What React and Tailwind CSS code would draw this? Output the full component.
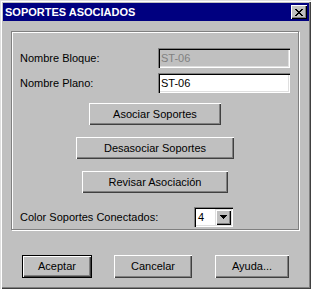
import React from "react";

const font = { fontFamily: '"Liberation Sans", Arial, sans-serif' };

function Btn({ children, w, h = 22, def = false }) {
  const inner = (
    <div
      className="flex items-center justify-center bg-[#c0c0c0] text-[11px] text-black shadow-[inset_1px_1px_0_#ffffff,inset_-1px_-1px_0_#404040,inset_-2px_-2px_0_#808080]"
      style={{ width: def ? w - 2 : w, height: def ? h - 2 : h }}
    >
      {children}
    </div>
  );
  if (def) return <div className="border border-black" style={{ width: w, height: h }}>{inner}</div>;
  return inner;
}

function Field({ value, disabled }) {
  return (
    <div
      className={`w-[132px] h-[20px] flex items-center pl-[3px] text-[11px] shadow-[inset_1px_1px_0_#808080,inset_2px_2px_0_#000000,inset_-1px_-1px_0_#ffffff,inset_-2px_-2px_0_#dfdfdf] ${disabled ? "bg-[#c0c0c0] text-[#808080]" : "bg-white text-black"}`}
    >
      {value}
    </div>
  );
}

export default function App() {
  return (
    <div
      className="w-[311px] h-[289px] bg-[#c0c0c0] flex flex-col pt-[3px] pl-[3px] pr-[2px] shadow-[inset_1px_1px_0_#dfdfdf,inset_2px_2px_0_#ffffff,inset_-1px_-1px_0_#404040,inset_-2px_-2px_0_#808080]"
      style={font}
    >
      <div className="h-[18px] bg-[#000080] flex items-center justify-between pl-[2px] pr-[2px]">
        <span className="text-white font-bold text-[11px] leading-none">SOPORTES ASOCIADOS</span>
        <div className="w-[16px] h-[14px] bg-[#c0c0c0] flex items-center justify-center shadow-[inset_1px_1px_0_#ffffff,inset_-1px_-1px_0_#000000,inset_-2px_-2px_0_#808080]">
          <svg width="8" height="7" viewBox="0 0 8 7" shapeRendering="crispEdges">
            <path d="M0 0h2v1h-2zM6 0h2v1h-2zM1 1h2v1h-2zM5 1h2v1h-2zM2 2h4v1h-4zM3 3h2v1h-2zM2 4h4v1h-4zM1 5h2v1h-2zM5 5h2v1h-2zM0 6h2v1h-2zM6 6h2v1h-2z" fill="#000" />
          </svg>
        </div>
      </div>

      <div className="ml-[8px] mt-[10px] w-[288px] h-[199px] border border-[#808080] shadow-[inset_1px_1px_0_#ffffff,1px_1px_0_#ffffff] flex flex-col pt-[16px] text-[11px] text-black">
        <div className="flex items-center pl-[8px]">
          <span className="w-[138px]">Nombre Bloque:</span>
          <Field value="ST-06" disabled />
        </div>
        <div className="flex items-center pl-[8px] mt-[5px]">
          <span className="w-[138px]">Nombre Plano:</span>
          <Field value="ST-06" />
        </div>
        <div className="mt-[10px] flex justify-center">
          <Btn w={132}>Asociar Soportes</Btn>
        </div>
        <div className="mt-[12px] flex justify-center">
          <Btn w={158}>Desasociar Soportes</Btn>
        </div>
        <div className="mt-[12px] flex justify-center">
          <Btn w={146}>Revisar Asociación</Btn>
        </div>
        <div className="mt-[14px] flex items-center pl-[8px]">
          <span className="w-[174px]">Color Soportes Conectados:</span>
          <div className="w-[39px] h-[20px] bg-white flex items-center shadow-[inset_1px_1px_0_#808080,inset_2px_2px_0_#000000,inset_-1px_-1px_0_#ffffff,inset_-2px_-2px_0_#dfdfdf] p-[2px]">
            <span className="flex-1 pl-[2px]">4</span>
            <div className="w-[16px] h-[16px] bg-[#c0c0c0] flex items-center justify-center shadow-[inset_1px_1px_0_#dfdfdf,inset_2px_2px_0_#ffffff,inset_-1px_-1px_0_#000000,inset_-2px_-2px_0_#808080]">
              <svg width="7" height="4" viewBox="0 0 7 4" shapeRendering="crispEdges">
                <path d="M0 0h7v1h-7zM1 1h5v1h-5zM2 2h3v1h-3zM3 3h1v1h-1z" fill="#000" />
              </svg>
            </div>
          </div>
        </div>
      </div>

      <div className="mt-[25px] ml-[19px] flex">
        <Btn w={70} h={23} def>Aceptar</Btn>
        <div className="ml-[22px]"><Btn w={78} h={23}>Cancelar</Btn></div>
        <div className="ml-[23px]"><Btn w={74} h={23}>Ayuda...</Btn></div>
      </div>
    </div>
  );
}
